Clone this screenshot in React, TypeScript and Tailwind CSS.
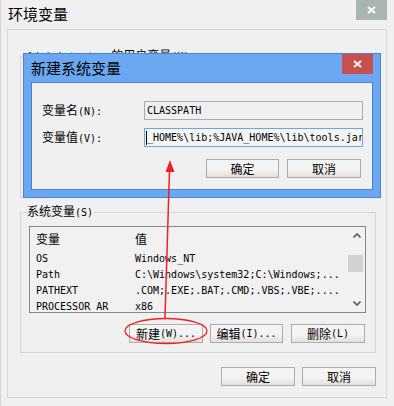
import React from "react";

const cjk = "font-['Noto_Sans_CJK_SC','Noto_Sans',sans-serif]";
const mono = "font-['DejaVu_Sans_Mono','Liberation_Mono','Noto_Sans_CJK_SC',monospace]";

function M({ children }: { children: React.ReactNode }) {
  return <span className={`${mono} text-[10px]`}>{children}</span>;
}

function Btn({ w, children }: { w: string; children: React.ReactNode }) {
  return (
    <div
      className={`${w} h-[19px] shrink-0 border border-[#acacac] bg-linear-to-b from-[#f4f4f4] from-55% to-[#e4e0d9] flex items-center justify-center text-[12px] leading-none text-black`}
    >
      {children}
    </div>
  );
}

function CloseX({ color = "white" }: { color?: string }) {
  return (
    <svg width="9" height="8" viewBox="0 0 9 8">
      <path d="M1 1 L8 7 M8 1 L1 7" stroke={color} strokeWidth="1.8" />
    </svg>
  );
}

function Chevron({ up }: { up: boolean }) {
  return (
    <svg width="8" height="5" viewBox="0 0 8 5">
      <polyline
        points={up ? "0.5,4.5 4,1 7.5,4.5" : "0.5,0.5 4,4 7.5,0.5"}
        fill="none"
        stroke="#52604f"
        strokeWidth="1.6"
      />
    </svg>
  );
}

const rows: [string, string][] = [
  ["OS", "Windows_NT"],
  ["Path", "C:\\Windows\\system32;C:\\Windows;..."],
  ["PATHEXT", ".COM;.EXE;.BAT;.CMD;.VBS;.VBE;...."],
  ["PROCESSOR_AR", "x86"],
];

export default function App() {
  return (
    <div
      className={`relative w-[394px] h-[406px] bg-[#f0f0f0] overflow-hidden border-l border-[#d4d4d4] ${cjk} text-black`}
    >
      {/* Title bar */}
      <div className="flex h-[29px] justify-between">
        <div className="pl-[7px] pt-[4px] text-[15px] leading-[20px]">环境变量</div>
        <div className="mr-[7px] w-[31px] h-[20px] bg-[#a9b5b0] flex items-center justify-center">
          <CloseX />
        </div>
      </div>

      {/* Client area */}
      <div className="ml-[6px] w-[380px] h-[369px] border border-[#d9d9d9] flex flex-col">
        {/* User variables group (mostly hidden) */}
        <fieldset className="ml-[12px] mt-[18px] w-[356px] h-[150px] border border-[#d5d5d5] px-[8px]">
          <legend className="-ml-[3px] px-[1px] text-[12px] leading-[14px] whitespace-nowrap">
            <M>Administrator </M>的用户变量<M>(U)</M>
          </legend>
        </fieldset>

        {/* System variables group */}
        <fieldset className="ml-[12px] mt-[6px] w-[356px] h-[149px] border border-[#d5d5d5] px-[8px]">
          <legend className="-ml-[3px] px-[1px] text-[12px] leading-[14px] whitespace-nowrap">
            系统变量<M>(S)</M>
          </legend>
          <div className="mt-[6px] w-[337px] h-[87px] border border-[#828790] bg-[#f1f1f1] flex overflow-hidden">
            <div className="flex-1 flex flex-col overflow-hidden">
              <div className="h-[24px] shrink-0 flex items-center pl-[6px] text-[12px] leading-none">
                <div className="w-[99px]">变量</div>
                <div>值</div>
              </div>
              {rows.map(([k, v]) => (
                <div key={k} className="h-[16px] shrink-0 flex items-center pl-[6px] whitespace-nowrap">
                  <div className={`w-[99px] ${mono} text-[10px] leading-none`}>{k}</div>
                  <div className={`${mono} text-[10px] leading-none`}>{v}</div>
                </div>
              ))}
            </div>
            <div className="w-[17px] shrink-0 flex flex-col">
              <div className="h-[17px] flex items-center justify-center">
                <Chevron up />
              </div>
              <div className="mt-[11px] h-[17px] w-[15px] bg-[#d2d2d2]" />
              <div className="flex-1" />
              <div className="h-[17px] flex items-center justify-center">
                <Chevron up={false} />
              </div>
            </div>
          </div>
          <div className="mt-[11px] mr-[2px] flex justify-end">
            <Btn w="w-[74px]">
              新建<M>(W)...</M>
            </Btn>
            <div className="w-[7px]" />
            <Btn w="w-[73px]">
              编辑<M>(I)...</M>
            </Btn>
            <div className="w-[8px]" />
            <Btn w="w-[74px]">
              删除<M>(L)</M>
            </Btn>
          </div>
        </fieldset>

        <div className="mt-[14px] mr-[10px] flex justify-end gap-[7px]">
          <Btn w="w-[74px]">确定</Btn>
          <Btn w="w-[74px]">取消</Btn>
        </div>
      </div>

      {/* New system variable dialog (floating window) */}
      <div className="absolute left-[22px] top-[53px] w-[358px] h-[145px] border border-[#4a86cf] bg-[#6aa9f2] flex flex-col">
        <div className="h-[28px] shrink-0 flex justify-between">
          <div className="pl-[7px] pt-[4px] text-[15px] leading-[20px]">新建系统变量</div>
          <div className="mr-[7px] w-[31px] h-[20px] bg-[#c75050] flex items-center justify-center">
            <CloseX />
          </div>
        </div>
        <div className="mx-[7px] h-[108px] border border-[#4b80c4] bg-[#f0f0f0] pl-[10px] pt-[18px]">
          <div className="flex items-center h-[19px]">
            <div className="w-[102px] text-[12px] leading-none">
              变量名<M>(N):</M>
            </div>
            <div className="w-[219px] h-[19px] border border-[#abadb3] bg-[#f0f0f0] pl-[2px] flex items-center overflow-hidden">
              <span className={`${mono} text-[10px] leading-none`}>CLASSPATH</span>
            </div>
          </div>
          <div className="mt-[8px] flex items-center h-[19px]">
            <div className="w-[102px] text-[12px] leading-none">
              变量值<M>(V):</M>
            </div>
            <div className="w-[219px] h-[19px] border border-[#6aa5e8] bg-[#f4f4f4] pl-[1px] flex items-center overflow-hidden whitespace-nowrap">
              <div className="w-[1px] h-[14px] bg-black shrink-0" />
              <span className={`${mono} text-[10px] leading-none`}>_HOME%\lib;%JAVA_HOME%\lib\tools.jar</span>
            </div>
          </div>
          <div className="mt-[12px] pr-[11px] flex justify-end gap-[8px]">
            <Btn w="w-[73px]">确定</Btn>
            <Btn w="w-[74px]">取消</Btn>
          </div>
        </div>
      </div>

      {/* Red annotation */}
      <svg className="absolute top-0 left-[-1px] pointer-events-none" width="394" height="406" viewBox="0 0 394 406">
        <ellipse cx="166" cy="331" rx="41" ry="12.5" fill="none" stroke="#ee2222" strokeWidth="1.3" />
        <line x1="165" y1="318" x2="169.5" y2="170" stroke="#ee2222" strokeWidth="1.5" />
        <polygon points="170,160 165.5,172 174.5,172" fill="#ee2222" />
      </svg>
    </div>
  );
}
